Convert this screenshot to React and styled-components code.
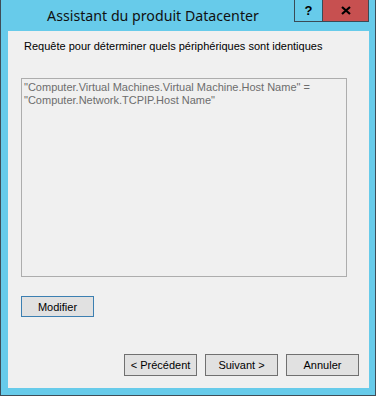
import React from 'react';
import styled, { createGlobalStyle } from 'styled-components';

const Global = createGlobalStyle`
  html, body { margin: 0; padding: 0; background: #ffffff; }
  * { box-sizing: border-box; }
`;

const Window = styled.div`
  width: 376px;
  height: 396px;
  background: #67cbea;
  border: 1px solid #3f4d57;
  border-top: none;
  display: flex;
  flex-direction: column;
`;

const TitleBar = styled.div`
  height: 31px;
  display: flex;
  align-items: flex-start;
  padding-right: 6px;
`;

const Title = styled.div`
  flex: 1;
  text-align: center;
  padding-left: 10px;
  padding-top: 6px;
  font-family: "Noto Sans", "DejaVu Sans", sans-serif;
  font-size: 14.2px;
  line-height: 20px;
  color: #111;
`;

const Control = styled.div`
  height: 22px;
  width: ${p => p.w}px;
  background: ${p => p.bg};
  border: 1px solid #3a4a55;
  border-top: none;
  margin-left: -1px;
  display: flex;
  align-items: center;
  justify-content: center;
  font-family: "Liberation Sans", Arial, sans-serif;
  font-weight: bold;
  font-size: 13px;
  color: #000;
`;

const Content = styled.div`
  flex: 1;
  margin: 0 6px 7px 7px;
  background: #f0f0f0;
  display: flex;
  flex-direction: column;
  padding: 9px 21px 12px 13px;
  font-family: "Liberation Sans", Arial, sans-serif;
  font-size: 11px;
`;

const Label = styled.div`
  padding-left: 3px;
  line-height: 13px;
  color: #000;
`;

const TextArea = styled.div`
  margin-top: 25px;
  width: 326px;
  height: 199px;
  border: 1px solid #adadad;
  padding: 2px 2px;
  color: #6d6d6d;
  line-height: 13px;
`;

const Button = styled.div`
  width: ${p => p.w || 73}px;
  height: ${p => p.h || 22}px;
  background: #e1e1e1;
  border: 1px solid ${p => (p.focus ? '#3c7fb1' : '#707070')};
  display: flex;
  align-items: center;
  justify-content: center;
  color: #000;
`;

const ModRow = styled.div`
  margin-top: 19px;
  display: flex;
`;

const Footer = styled.div`
  margin-top: auto;
  display: flex;
  justify-content: flex-end;
  gap: 8px;
  margin-right: -11px;
`;

export default function App() {
  return (
    <>
      <Global />
      <Window>
        <TitleBar>
          <Title>Assistant du produit Datacenter</Title>
          <Control w={29} bg="#67cbea">?</Control>
          <Control w={47} bg="#c75050">
            <svg width="10" height="9" viewBox="0 0 10 9">
              <path d="M1 1 L9 8 M9 1 L1 8" stroke="#000" strokeWidth="2.2" />
            </svg>
          </Control>
        </TitleBar>
        <Content>
          <Label>Requête pour déterminer quels périphériques sont identiques</Label>
          <TextArea>
            "Computer.Virtual Machines.Virtual Machine.Host Name" =<br />
            "Computer.Network.TCPIP.Host Name"
          </TextArea>
          <ModRow>
            <Button focus h={21}>Modifier</Button>
          </ModRow>
          <Footer>
            <Button>&lt; Précédent</Button>
            <Button>Suivant &gt;</Button>
            <Button>Annuler</Button>
          </Footer>
        </Content>
      </Window>
    </>
  );
}
